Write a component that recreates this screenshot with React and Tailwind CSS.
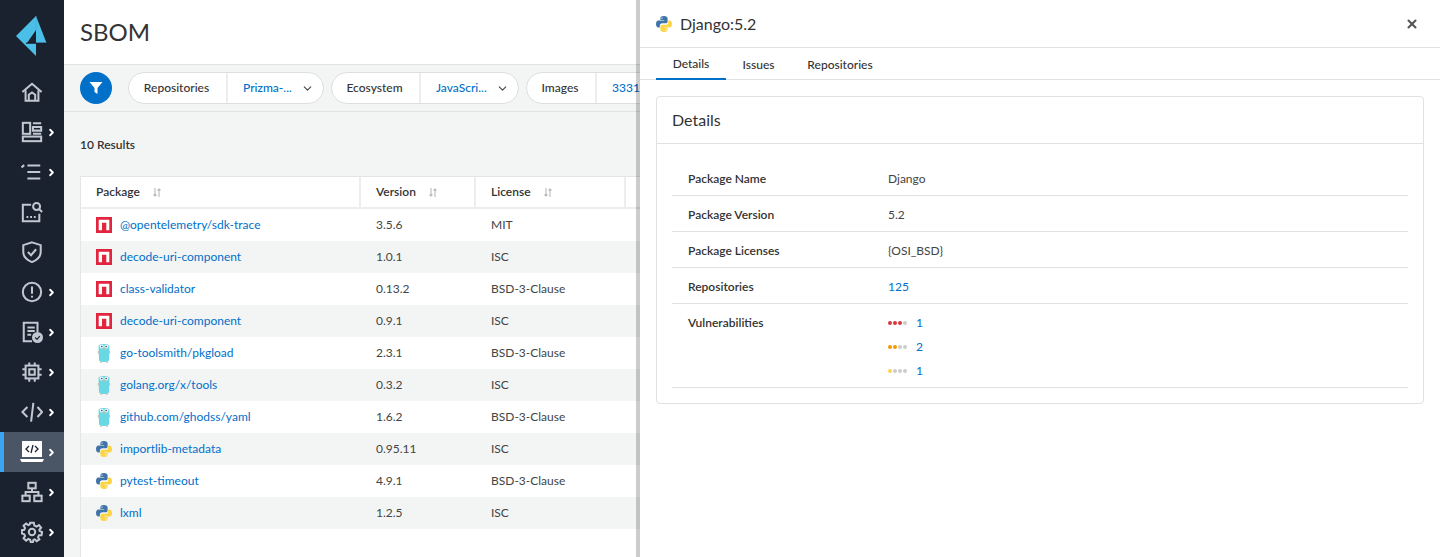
import { ChevronRight, ChevronDown, X } from 'lucide-react'

const rows = [
  { type: 'npm', name: '@opentelemetry/sdk-trace', version: '3.5.6', license: 'MIT' },
  { type: 'npm', name: 'decode-uri-component', version: '1.0.1', license: 'ISC' },
  { type: 'npm', name: 'class-validator', version: '0.13.2', license: 'BSD-3-Clause' },
  { type: 'npm', name: 'decode-uri-component', version: '0.9.1', license: 'ISC' },
  { type: 'go', name: 'go-toolsmith/pkgload', version: '2.3.1', license: 'BSD-3-Clause' },
  { type: 'go', name: 'golang.org/x/tools', version: '0.3.2', license: 'ISC' },
  { type: 'go', name: 'github.com/ghodss/yaml', version: '1.6.2', license: 'BSD-3-Clause' },
  { type: 'py', name: 'importlib-metadata', version: '0.95.11', license: 'ISC' },
  { type: 'py', name: 'pytest-timeout', version: '4.9.1', license: 'BSD-3-Clause' },
  { type: 'py', name: 'lxml', version: '1.2.5', license: 'ISC' },
]

function Logo() {
  return (
    <svg width="32" height="40" viewBox="0 0 32 40">
      <path d="M20 0 L0 20 L20 40 Z" fill="#4bbfe8" />
      <path d="M20 0 L30.5 27 L20 27 Z" fill="#4bbfe8" />
      <path d="M20 14 L20 27 L11 27 Z" fill="#1a2230" />
      <path d="M10 27.2 H30.5" stroke="#1a2230" strokeWidth="1.2" />
      <path d="M20 0 V14" stroke="#3aa6d0" strokeWidth="0.5" />
    </svg>
  )
}

const navIcons = [
  { chevron: false, d: <><path d="M1.5 12 L12 3 L22.5 12" /><path d="M5 10 V21.5 H19 V10" /><path d="M8.5 21 V15 L12 12.5 L15.5 15 V21" /></> },
  { chevron: true, d: <><rect x="2" y="2" width="8" height="12" /><path d="M13 2.5 H22 M13 6.5 H22 V10.5 H13 Z M13 14 H22" /><rect x="2" y="17" width="20" height="5" /></> },
  { chevron: true, d: <><path d="M0.5 7 L3.5 4.5" /><path d="M7 5 H21 M7 12 H21 M7 19 H21" /></> },
  { chevron: false, d: <><path d="M11 4 H2 V22 H20 V14" /><circle cx="17" cy="6" r="3.8" /><path d="M19.7 8.7 L23 12" /><path d="M6 17.5 H8 M10 17.5 H12 M14 17.5 H16" /></> },
  { chevron: false, d: <><path d="M12 1.5 L21.5 4.5 V12 C21.5 17 17 21 12 23 C7 21 2.5 17 2.5 12 V4.5 Z" /><path d="M7.5 12 L11 15.5 L16.5 9" /></> },
  { chevron: true, d: <><circle cx="12" cy="12" r="10" /><path d="M12 6 V14 M12 16 V18" /></> },
  { chevron: true, badge: true, d: <><path d="M18 12 V2 H3 V22 H12" /><path d="M7 7 H15 M7 11 H15 M7 15 H11" /></> },
  { chevron: true, d: <><rect x="5" y="5" width="14" height="14" /><rect x="9" y="9" width="6" height="6" /><path d="M9 1.5 V5 M15 1.5 V5 M9 19 V22.5 M15 19 V22.5 M1.5 9 H5 M1.5 15 H5 M19 9 H22.5 M19 15 H22.5" /></> },
  { chevron: true, wide: true, d: <><path d="M7 6.5 L1.5 12 L7 17.5" /><path d="M13.5 2 L11 22.5" /><path d="M18 6.5 L23 12 L18 17.5" /></> },
  { chevron: true, active: true },
  { chevron: true, d: <><rect x="8" y="2" width="8" height="6" /><path d="M12 8 V12 M5 16 V12 H19 V16" /><rect x="1.5" y="16" width="8" height="6" /><rect x="14.5" y="16" width="8" height="6" /></> },
  { chevron: true, d: <><circle cx="12" cy="12" r="3.5" /><path d="M10 2 H14 L14.6 5 L17 6 L19.6 4.4 L22 7.4 L20 9.6 L20.4 11 L23 12 L22.4 15.6 L19.6 15.6 L18.6 17.6 L20 20 L17 22 L15 20 L13.6 20.4 L13 23 H10.6 L10 20.4 L8 19.6 L5.6 21.4 L2.8 18.8 L4.4 16.4 L3.6 14.4 L1 13.6 V10 L3.6 9.6 L4.4 7.6 L2.8 5.2 L5.6 2.8 L8 4.4 L9.6 3.6 Z" /></> },
]

function NavRow({ item }) {
  return (
    <div className={`relative flex h-10 items-center justify-center ${item.active ? 'bg-[#4a5565]' : ''}`}>
      {item.active && <div className="absolute left-0 top-0 h-10 w-1 bg-[#38a5f5]" />}
      {item.active ? (
        <svg width="24" height="22" viewBox="0 0 24 22">
          <rect x="2" y="0" width="20" height="16" fill="#fff" />
          <path d="M0 18 H24 L22.5 21 H1.5 Z" fill="#fff" />
          <path d="M9 5 L6 8 L9 11 M15 5 L18 8 L15 11 M13 4 L11 12" fill="none" stroke="#1a2230" strokeWidth="1.3" />
        </svg>
      ) : (
        <svg width="22" height="22" viewBox="0 0 24 24" fill="none" stroke="#c3c8d0" strokeWidth="2.2">
          {item.d}
          {item.badge && (
            <>
              <circle cx="18" cy="18" r="6" fill="#c3c8d0" stroke="none" />
              <path d="M15.5 18 L17.5 20 L20.5 16.5" stroke="#1a2230" strokeWidth="1.4" />
            </>
          )}
        </svg>
      )}
      {item.chevron && <ChevronRight size={11} strokeWidth={4} color="#fff" className="absolute left-[46px] top-[15px]" />}
    </div>
  )
}

function NpmIcon() {
  return (
    <svg width="16" height="16" viewBox="0 0 16 16">
      <rect width="16" height="16" fill="#e2243c" />
      <path d="M2.7 2.7 H13.3 V13.3 H10.3 V5.7 H6 V13.3 H2.7 Z" fill="#fff" />
    </svg>
  )
}

function GoIcon() {
  return (
    <svg width="16" height="20" viewBox="0 0 16 20">
      <path d="M2.5 3 C3 1.5 5 1 8 1 C11 1 13 1.5 13.5 3 L13 17 C13 18.5 11 19 8 19 C5 19 3 18.5 3 17 Z" fill="#6ad7e5" />
      <circle cx="5.6" cy="3.6" r="2" fill="#e8f4f6" />
      <circle cx="10.4" cy="3.6" r="2" fill="#e8f4f6" />
      <circle cx="5.8" cy="3.6" r="0.8" fill="#555" />
      <circle cx="10.2" cy="3.6" r="0.8" fill="#555" />
      <rect x="7.2" y="5.2" width="1.6" height="1.8" fill="#c8b89a" />
      <rect x="1.8" y="8" width="1" height="2.5" fill="#c8b89a" />
      <rect x="13.2" y="8" width="1" height="2.5" fill="#c8b89a" />
      <rect x="4" y="18.6" width="2" height="1" fill="#c8b89a" />
      <rect x="10" y="18.6" width="2" height="1" fill="#c8b89a" />
    </svg>
  )
}

function PyIcon() {
  return (
    <svg width="16" height="16" viewBox="0 0 16 16">
      <path d="M8 0 C5 0 4.4 1.2 4.4 2.4 V4 H8.2 V4.6 H2.4 C1 4.6 0 5.8 0 8 C0 10.2 1 11.4 2.4 11.4 H3.8 V9.6 C3.8 8.2 5 7.2 6.2 7.2 H9.8 C10.9 7.2 11.6 6.4 11.6 5.4 V2.4 C11.6 1 10.4 0 8 0 Z" fill="#3f74a8" />
      <circle cx="6" cy="2.1" r="0.7" fill="#fff" />
      <path d="M8 16 C11 16 11.6 14.8 11.6 13.6 V12 H7.8 V11.4 H13.6 C15 11.4 16 10.2 16 8 C16 5.8 15 4.6 13.6 4.6 H12.2 V6.4 C12.2 7.8 11 8.8 9.8 8.8 H6.2 C5.1 8.8 4.4 9.6 4.4 10.6 V13.6 C4.4 15 5.6 16 8 16 Z" fill="#fdd444" />
      <circle cx="10" cy="13.9" r="0.7" fill="#fff" />
    </svg>
  )
}

const typeIcons = { npm: NpmIcon, go: GoIcon, py: PyIcon }

function SortIcon() {
  return (
    <svg width="8" height="9" viewBox="0 0 8 9" fill="none" stroke="#b5b9bd" strokeWidth="1.1" className="ml-[13px]">
      <path d="M2 0 V8 M0.5 6.5 L2 8 L3.5 6.5 M6 9 V1 M4.5 2.5 L6 1 L7.5 2.5" />
    </svg>
  )
}

function FilterPill({ label, value, labelWidth, valueWidth, chevron = true }) {
  return (
    <div className="flex h-8 flex-none overflow-hidden rounded-full border border-[#dcdfe0] bg-white text-xs">
      <div className={`flex items-center justify-center border-r-2 border-[#eceeee] pr-[2px] font-medium text-[#333] ${labelWidth}`}>{label}</div>
      <div className={`flex items-center pl-[15px] font-medium text-[#0070c9] ${valueWidth}`}>
        <span>{value}</span>
        {chevron && <ChevronDown size={13} color="#444" strokeWidth={2} className="ml-[9px]" />}
      </div>
    </div>
  )
}

function Dots({ colors, count }) {
  return (
    <div className="flex h-6 items-center text-xs text-[#0070c9]">
      <div className="flex w-7 gap-[1px]">
        {colors.map((c, i) => (
          <span key={i} className={`h-[4px] w-[4px] rounded-full ${c}`} />
        ))}
      </div>
      <span>{count}</span>
    </div>
  )
}

function DetailRow({ label, children, className = 'h-9 items-center pt-[2px]' }) {
  return (
    <div className={`flex border-b border-[#dfe1e2] pl-4 text-xs ${className}`}>
      <div className="w-[200px] flex-none font-semibold text-[#333]">{label}</div>
      <div className="text-[#444]">{children}</div>
    </div>
  )
}

export default function App() {
  return (
    <div className="flex h-[557px] w-[1440px] overflow-hidden bg-white font-['Lato',sans-serif]">
      {/* Sidebar */}
      <nav className="flex w-16 flex-none flex-col bg-[#1a2230]">
        <div className="flex h-[72px] flex-none items-start pl-4 pt-4">
          <Logo />
        </div>
        {navIcons.map((item, i) => (
          <NavRow key={i} item={item} />
        ))}
      </nav>

      {/* Main content, the panel's translucent edge lies over its last 4px */}
      <main className="relative flex w-[576px] flex-none flex-col overflow-hidden">
        <header className="flex h-[65px] flex-none items-center border-b border-[#dfe1e2] pl-4 text-2xl text-[#333]">SBOM</header>
        <div className="flex h-[47px] flex-none items-center gap-[7px] border-b-[1px] border-[#dfe1e2] bg-[#f3f5f5] pl-4">
          <div className="mr-[9px] flex h-8 w-8 flex-none items-center justify-center rounded-full bg-[#0070c9]">
            <svg width="14" height="14" viewBox="0 0 14 14" fill="#fff">
              <path d="M0.5 1 H13.5 L8.5 7 V13 L5.5 11 V7 Z" />
            </svg>
          </div>
          <FilterPill label="Repositories" value="Prizma-..." labelWidth="w-[99px]" valueWidth="w-[95px]" />
          <FilterPill label="Ecosystem" value="JavaScri..." labelWidth="w-[89px]" valueWidth="w-[97px]" />
          <FilterPill label="Images" value="3331" labelWidth="w-[70px]" valueWidth="w-[120px]" chevron={false} />
        </div>
        <div className="flex flex-1 flex-col bg-[#f3f5f5] pl-4">
          <div className="flex h-[64px] flex-none items-center pt-[2px] text-xs font-semibold text-[#333]">10 Results</div>
          <div className="flex-1 border-l border-t border-[#e3e5e6] bg-white">
            <div className="flex h-8 border-b-2 border-[#eceeee] text-xs font-semibold text-[#333]">
              <div className="flex w-[280px] flex-none items-center border-r-2 border-[#eceeee] pl-[15px]">Package<SortIcon /></div>
              <div className="flex w-[115px] flex-none items-center border-r-2 border-[#eceeee] pl-[15px]">Version<SortIcon /></div>
              <div className="flex w-[150px] flex-none items-center border-r-2 border-[#eceeee] pl-[15px]">License<SortIcon /></div>
            </div>
            {rows.map((r, i) => {
              const Icon = typeIcons[r.type]
              return (
                <div key={i} className={`flex h-8 items-center text-xs text-[#444] ${i % 2 === 1 ? 'bg-[#f3f5f5]' : ''}`}>
                  <div className="flex w-[280px] flex-none items-center pl-[15px]">
                    <span className="flex w-6 flex-none"><Icon /></span>
                    <span className="text-[#0070c9]">{r.name}</span>
                  </div>
                  <div className="w-[115px] flex-none pl-[15px]">{r.version}</div>
                  <div className="w-[150px] flex-none pl-[15px]">{r.license}</div>
                </div>
              )
            })}
          </div>
        </div>
        <div className="absolute right-0 top-0 h-full w-1 bg-black/20" />
      </main>

      {/* Detail panel */}
      <aside className="flex flex-1 flex-col bg-white">
        <div className="flex h-12 flex-none items-center justify-between border-b border-[#dfe1e2] pl-4 pr-[21px]">
          <div className="flex items-center gap-2 text-base text-[#333]">
            <PyIcon />
            <span>Django:5.2</span>
          </div>
          <X size={14} strokeWidth={3.5} color="#555" />
        </div>
        <div className="flex h-8 flex-none border-b border-[#dfe1e2] pl-4 text-xs font-medium text-[#333]">
          <div className="flex h-8 w-[70px] items-center justify-center border-b-2 border-[#0070c9] pt-[2px]">Details</div>
          <div className="flex w-[65px] items-center justify-center pt-[2px]">Issues</div>
          <div className="flex w-[98px] items-center justify-center pt-[2px]">Repositories</div>
        </div>
        <div className="px-4 pt-4">
          <div className="h-[308px] rounded border border-[#dfe1e2]">
            <div className="flex h-[47px] items-center border-b border-[#dfe1e2] pl-[15px] text-base text-[#333]">Details</div>
            <div className="px-[15px] pt-4">
              <DetailRow label="Package Name">Django</DetailRow>
              <DetailRow label="Package Version">5.2</DetailRow>
              <DetailRow label="Package Licenses">{'{OSI_BSD}'}</DetailRow>
              <DetailRow label="Repositories"><span className="text-[#0070c9]">125</span></DetailRow>
              <DetailRow label="Vulnerabilities" className="h-[84px] items-start pt-[11px]">
                <div className="-mt-[4px]">
                  <Dots colors={['bg-[#d9363e]', 'bg-[#d9363e]', 'bg-[#d9363e]', 'bg-[#cccccc]']} count="1" />
                  <Dots colors={['bg-[#f29a05]', 'bg-[#f29a05]', 'bg-[#cccccc]', 'bg-[#cccccc]']} count="2" />
                  <Dots colors={['bg-[#fcd34d]', 'bg-[#cccccc]', 'bg-[#cccccc]', 'bg-[#cccccc]']} count="1" />
                </div>
              </DetailRow>
            </div>
          </div>
        </div>
      </aside>
    </div>
  )
}
